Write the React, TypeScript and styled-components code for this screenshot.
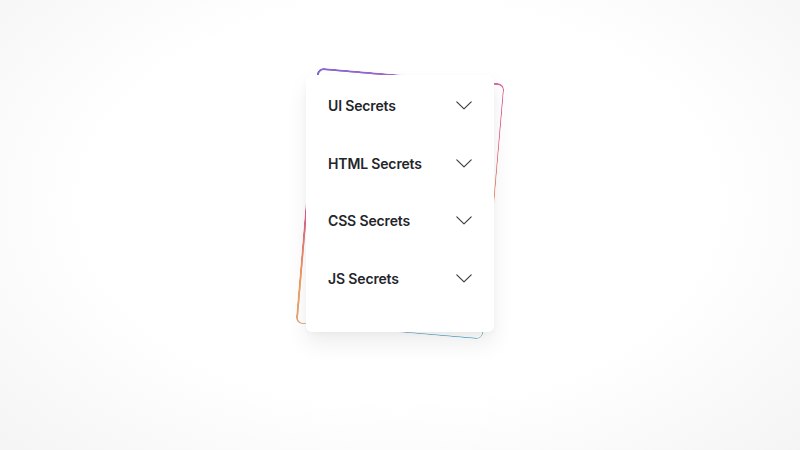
import React from 'react';
import styled, { createGlobalStyle } from 'styled-components';

const GlobalStyle = createGlobalStyle`
  html, body {
    margin: 0;
    padding: 0;
    height: 100%;
  }
  #root {
    height: 100%;
  }
`;

const PageRoot = styled.div`
  display: flex;
  align-items: center;
  justify-content: center;
  width: 100vw;
  height: 100vh;
  padding-bottom: 44px;
  box-sizing: border-box;
  background: radial-gradient(ellipse 70% 80% at 50% 45%, #ffffff 55%, #f4f4f4 100%);
  font-family: 'Inter', 'Noto Sans', sans-serif;
`;

const Stack = styled.div`
  position: relative;
  width: 188px;
  height: 257px;

  /* tilted frame with the rainbow border behind the card */
  &::before {
    content: '';
    position: absolute;
    inset: 0;
    border-radius: 7px;
    padding: 1.5px;
    transform: rotate(4.9deg);
    background: conic-gradient(
      from 0deg,
      #b06ac0 0deg,
      #e46d98 45deg,
      #ee9a7a 80deg,
      #f2c044 110deg,
      #6cb9dc 150deg,
      #9fbfd0 185deg,
      #f0a25c 225deg,
      #d9489f 270deg,
      #7d66d4 320deg,
      #b06ac0 360deg
    );
    -webkit-mask: linear-gradient(#000 0 0) content-box, linear-gradient(#000 0 0);
    -webkit-mask-composite: xor;
    mask-composite: exclude;
  }
`;

const Card = styled.div`
  position: relative;
  display: flex;
  flex-direction: column;
  width: 100%;
  height: 100%;
  box-sizing: border-box;
  padding: 2px 22px 24px;
  background: #ffffff;
  border-radius: 6px;
  box-shadow: 0 12px 22px rgba(0, 0, 0, 0.07), 0 2px 6px rgba(0, 0, 0, 0.03);
`;

const Row = styled.div`
  display: flex;
  align-items: center;
  justify-content: space-between;
  height: 58px;
`;

const Title = styled.span`
  font-size: 14px;
  font-weight: 600;
  color: #23252b;
  letter-spacing: -0.15px;
`;

const Chevron: React.FC = () => (
  <svg width="16" height="9" viewBox="0 0 16 9" fill="none">
    <path d="M0.8 0.8 L8 7.8 L15.2 0.8" stroke="#35373d" strokeWidth="1.1" strokeLinecap="round" strokeLinejoin="round" />
  </svg>
);

const sections = ['UI Secrets', 'HTML Secrets', 'CSS Secrets', 'JS Secrets'];

export default function App() {
  return (
    <PageRoot>
      <GlobalStyle />
      <Stack>
        <Card>
          {sections.map(it => (
            <Row key={it}>
              <Title>{it}</Title>
              <Chevron />
            </Row>
          ))}
        </Card>
      </Stack>
    </PageRoot>
  );
}
